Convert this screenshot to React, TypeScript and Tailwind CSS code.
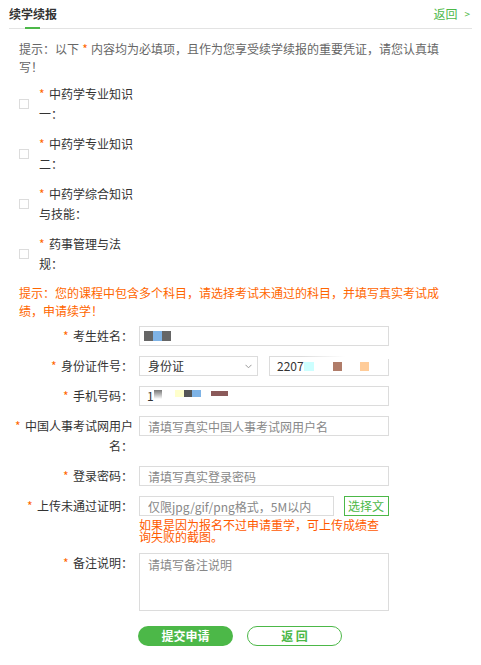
import React from "react";

function Star() {
  return <span className="inline-block w-[10px] text-left text-[#ff6600]">*</span>;
}

function Label({ children }: { children: React.ReactNode }) {
  return (
    <div className="w-[124px] shrink-0 text-right text-[12px] leading-[20px] text-[#333]">
      <Star />
      {children}
    </div>
  );
}

function Check({ text }: { text: string }) {
  return (
    <div className="flex h-[40px] items-center">
      <div className="h-[10px] w-[10px] shrink-0 border border-[#dcdcdc] bg-white" />
      <div className="ml-[10px] w-[96px] text-[12px] leading-[20px] text-[#333]">
        <Star />
        {text}
      </div>
    </div>
  );
}

const inputCls =
  "h-[20px] border border-[#dcdcdc] bg-white px-[8px] text-[12px] text-[#333] outline-none placeholder:text-[#888]";

export default function App() {
  return (
    <div className="h-[665px] w-[481px] overflow-hidden bg-white px-[9px] font-['Noto_Sans_CJK_SC',sans-serif]">
      {/* header */}
      <div className="relative flex h-[29px] items-center justify-between border-b border-[#e3e3e3]">
        <div className="relative h-[28px] text-[12px] font-bold leading-[28px] text-[#333]">
          续学续报
          <div className="absolute bottom-[-1px] left-[16px] h-[2px] w-[15px] bg-[#4cb848]" />
        </div>
        <div className="flex items-center pr-[2px] text-[12px] leading-[28px] text-[#4cb848]">
          <span>返回</span>
          <span className="ml-[7px] text-[10px]">&gt;</span>
        </div>
      </div>

      <div className="px-[10px]">
        <p className="mt-[11px] w-[426px] text-[12px] leading-[18px] text-[#666]">
          提示：以下<span className="inline-block w-[12px] text-center text-[#ff6600]">*</span>内容均为必填项，且作为您享受续学续报的重要凭证，请您认真填写！
        </p>

        <div className="mt-[8px] flex flex-col gap-[10px]">
          <Check text="中药学专业知识一：" />
          <Check text="中药学专业知识二：" />
          <Check text="中药学综合知识与技能：" />
          <Check text="药事管理与法规：" />
        </div>

        <p className="mt-[10px] w-[426px] text-[12px] leading-[18px] text-[#ff6600]">
          提示：您的课程中包含多个科目，请选择考试未通过的科目，并填写真实考试成绩，申请续学！
        </p>
      </div>

      {/* form */}
      <div className="mt-[6px] flex flex-col">
        <div className="flex items-start gap-[6px]">
          <Label>考生姓名：</Label>
          <div className="flex h-[20px] w-[250px] items-center border border-[#dcdcdc] pl-[4px]">
            <span className="h-[10px] w-[9px] bg-[#666]" />
            <span className="h-[10px] w-[9px] bg-[#7eb3e6]" />
            <span className="h-[10px] w-[9px] bg-[#666]" />
          </div>
        </div>

        <div className="mt-[10px] flex items-start gap-[6px]">
          <Label>身份证件号：</Label>
          <div className="flex w-[250px] gap-[11px]">
            <div className="flex h-[20px] w-[119px] items-center justify-between border border-[#dcdcdc] pl-[8px] pr-[5px] text-[12px] text-[#333]">
              <span>身份证</span>
              <svg width="7" height="5" viewBox="0 0 7 5" fill="none">
                <path d="M0.5 0.8 L3.5 3.8 L6.5 0.8" stroke="#999" strokeWidth="1" />
              </svg>
            </div>
            <div className="relative flex h-[20px] w-[120px] items-center border border-[#dcdcdc] pl-[7px] text-[12px] text-[#333]">
              <span>2207</span>
              <span className="h-[9px] w-[10px] bg-[#ccffff]" />
              <span className="ml-[19px] h-[9px] w-[9px] bg-[#b07c69]" />
              <span className="ml-[18px] h-[9px] w-[9px] bg-[#ffcc99]" />
              <div className="absolute right-[-1px] top-[-3px] h-[5px] w-[88px] bg-gradient-to-r from-transparent via-white to-white" />
            </div>
          </div>
        </div>

        <div className="mt-[10px] flex items-start gap-[6px]">
          <Label>手机号码：</Label>
          <div className="flex h-[20px] w-[250px] items-center border border-[#dcdcdc] pl-[7px] text-[12px] text-[#333]">
            <span>1</span>
            <span className="mb-[4px] h-[9px] w-[8px] bg-gradient-to-b from-[#777] to-white" />
            <span className="mb-[6px] ml-[13px] h-[7px] w-[9px] bg-[#ffffcc]" />
            <span className="mb-[6px] h-[7px] w-[8px] bg-[#555]" />
            <span className="mb-[6px] h-[7px] w-[9px] bg-[#7eb3e6]" />
            <span className="mb-[5px] ml-[10px] h-[5px] w-[17px] bg-[#8b5a5a]" />
          </div>
        </div>

        <div className="mt-[10px] flex items-start gap-[6px]">
          <Label>中国人事考试网用户名：</Label>
          <input className={`${inputCls} w-[250px]`} placeholder="请填写真实中国人事考试网用户名" />
        </div>

        <div className="mt-[10px] flex items-start gap-[6px]">
          <Label>登录密码：</Label>
          <input className={`${inputCls} w-[250px]`} placeholder="请填写真实登录密码" />
        </div>

        <div className="mt-[10px] flex items-start gap-[6px]">
          <Label>上传未通过证明：</Label>
          <div className="flex w-[250px] flex-col">
            <div className="flex justify-between">
              <input className={`${inputCls} w-[195px]`} placeholder="仅限jpg/gif/png格式，5M以内" />
              <div className="flex h-[20px] w-[45px] items-center border border-[#4cb848] pl-[3px] text-[12px] text-[#4cb848]">
                选择文
              </div>
            </div>
            <p className="mt-[3px] text-[12px] leading-[12px] text-[#ff5a00]">
              如果是因为报名不过申请重学，可上传成绩查询失败的截图。
            </p>
          </div>
        </div>

        <div className="mt-[10px] flex items-start gap-[6px]">
          <Label>备注说明：</Label>
          <textarea
            className="h-[58px] w-[250px] resize-none border border-[#dcdcdc] px-[8px] pt-[2px] text-[12px] leading-[18px] text-[#333] outline-none placeholder:text-[#888]"
            placeholder="请填写备注说明"
          />
        </div>

        <div className="mt-[15px] flex gap-[14px] pl-[129px]">
          <div className="flex h-[20px] w-[95px] items-center justify-center rounded-full bg-[#4cb848] text-[12px] font-bold text-white">
            提交申请
          </div>
          <div className="flex h-[20px] w-[95px] items-center justify-center rounded-full border border-[#4cb848] text-[12px] font-bold text-[#4cb848]">
            返 回
          </div>
        </div>
      </div>
    </div>
  );
}
